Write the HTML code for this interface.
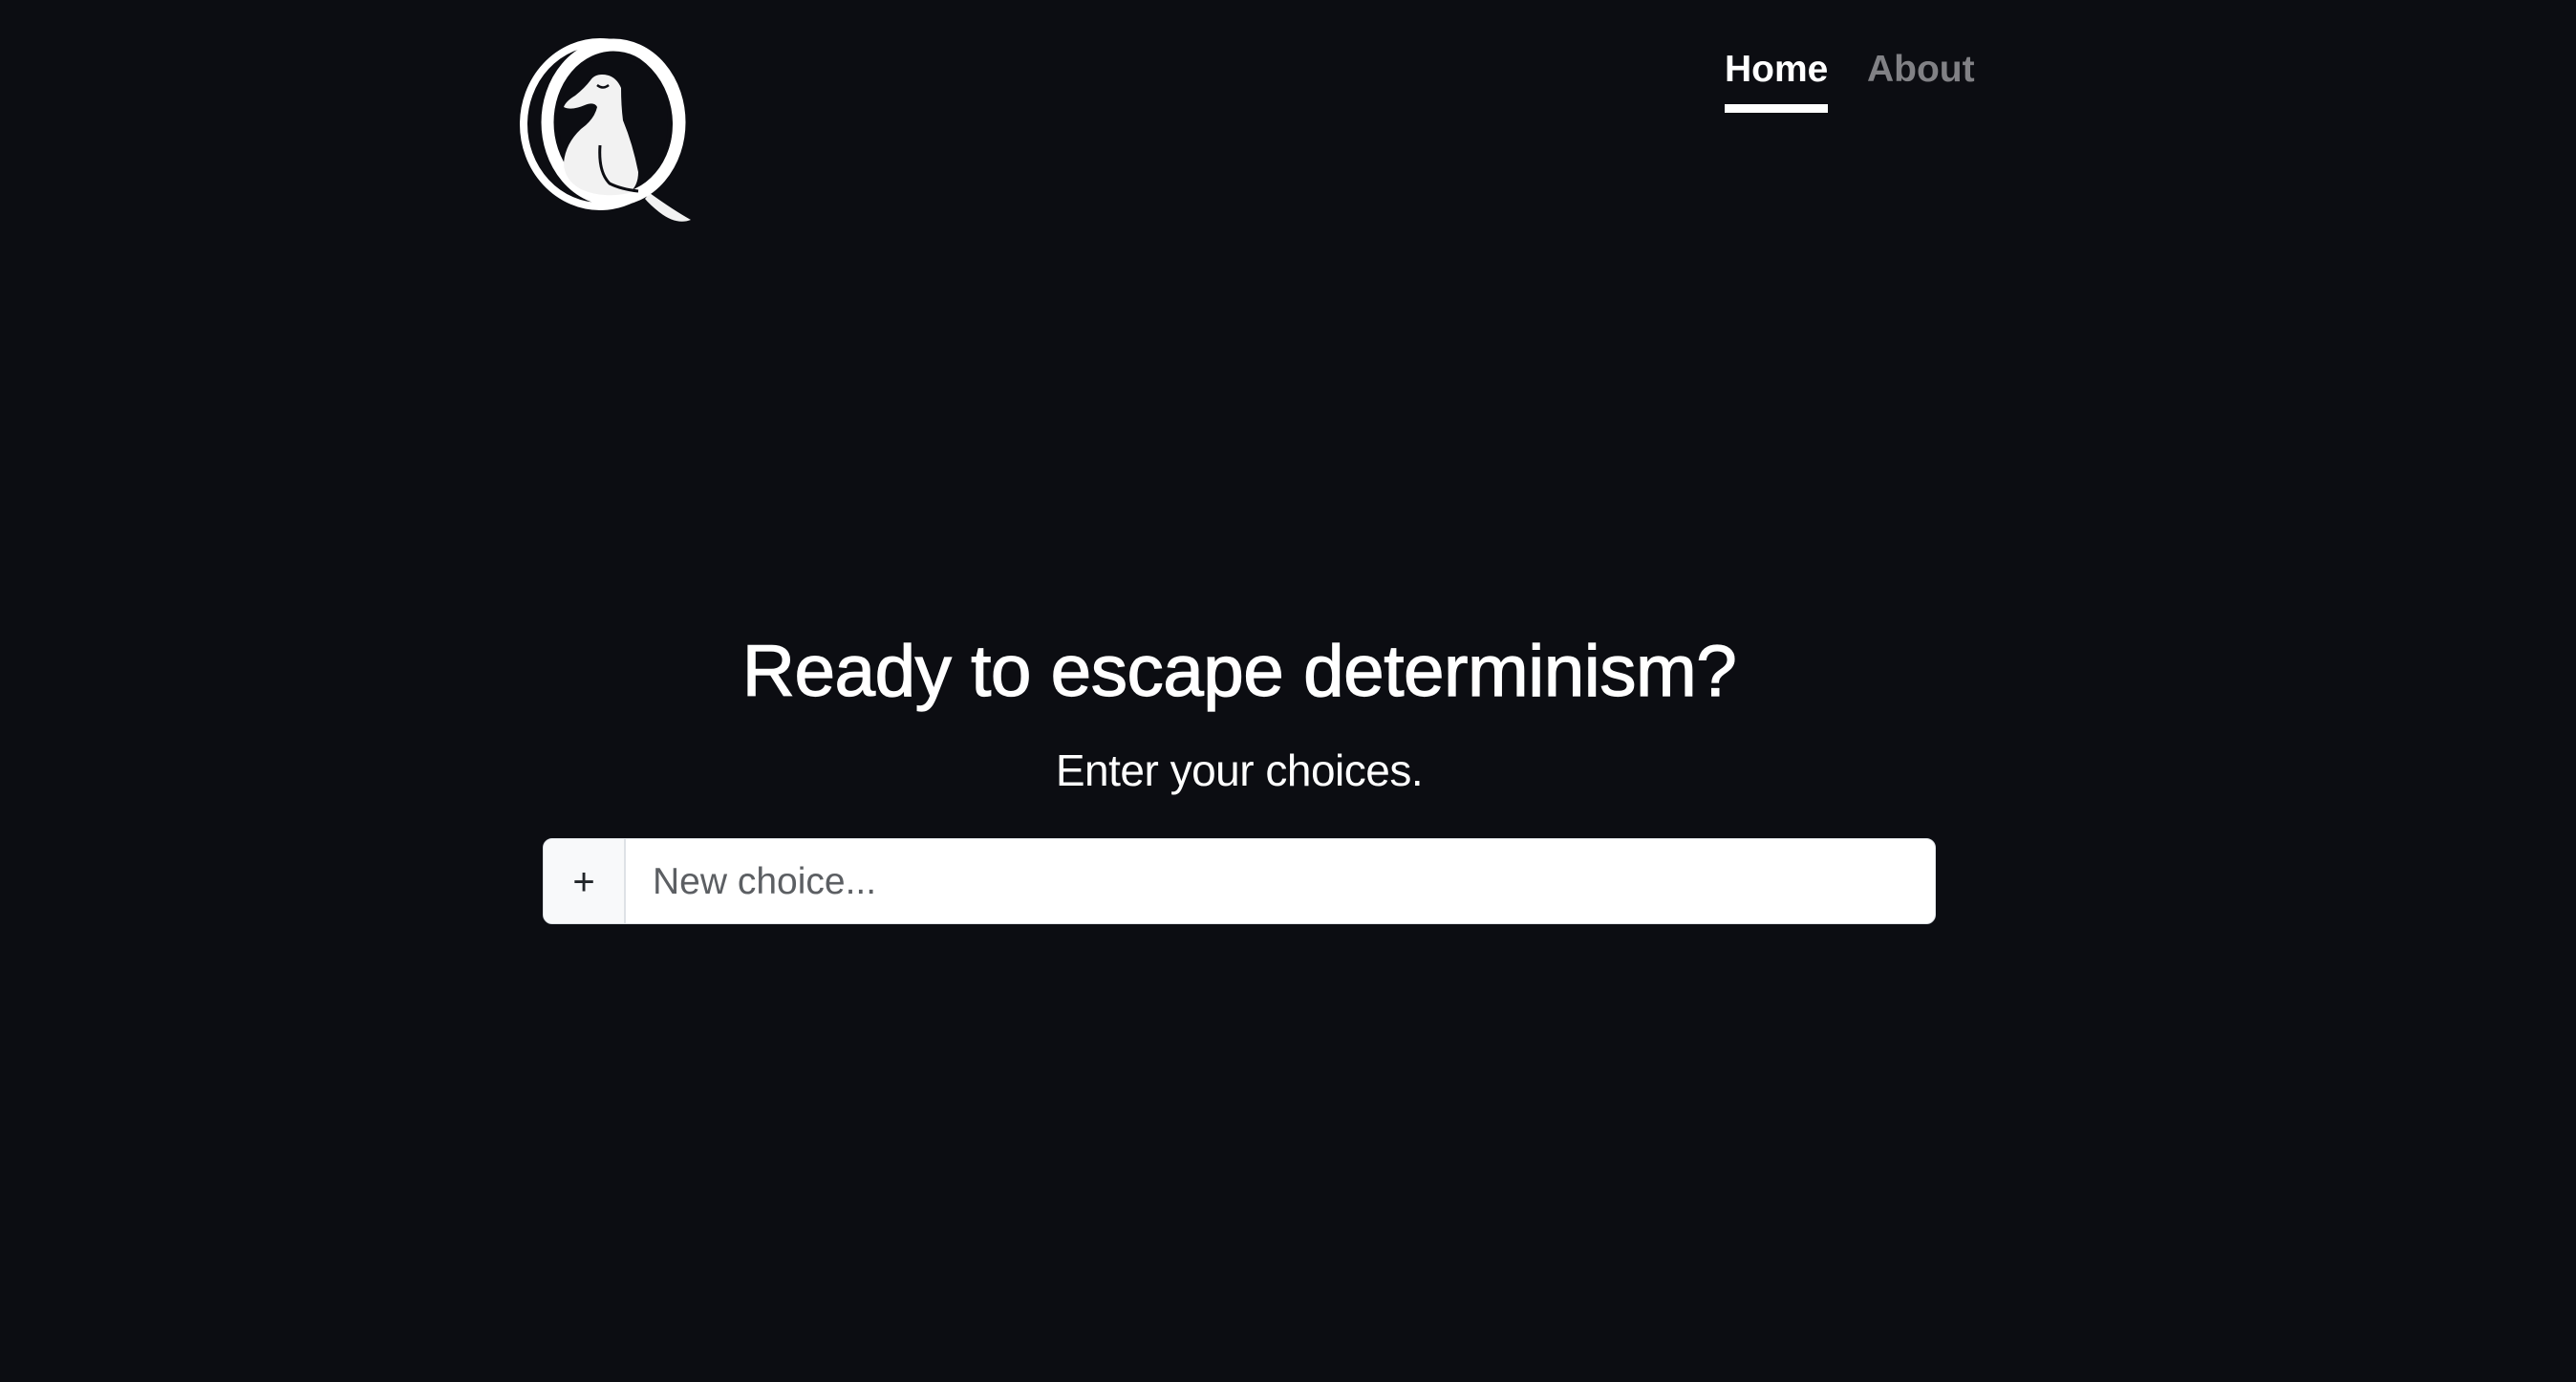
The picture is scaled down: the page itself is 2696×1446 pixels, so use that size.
<!DOCTYPE html>
<html><head><meta charset="utf-8"><style>
html,body{margin:0;padding:0;background:#0c0d12;width:2696px;height:1446px;overflow:hidden;font-family:"Liberation Sans",sans-serif}
.nav{position:absolute;top:48px;font-size:39px;font-weight:bold;line-height:50px}
.home{left:1805px;color:#fff}
.home:after{content:"";position:absolute;left:0;right:0;top:61px;height:9px;background:#fff}
.about{left:1954px;color:#818185}
h1{position:absolute;left:0;width:2594px;top:658px;margin:0;text-align:center;color:#fff;font-size:76.5px;font-weight:normal;line-height:90px;letter-spacing:-0.5px;-webkit-text-stroke:1.2px #fff}
.sub{position:absolute;left:0;width:2594px;top:778px;text-align:center;color:#fff;font-size:46px;line-height:56px;letter-spacing:-0.5px}
.box{position:absolute;left:568px;top:877px;width:1458px;height:90px;background:#fff;border-radius:10px;border:1px solid #dee2e6;box-sizing:border-box;overflow:hidden}
.add{position:absolute;left:0;top:0;width:84px;height:100%;background:#f8f9fa;border-right:2px solid #dee2e6;color:#212529;font-size:40px;line-height:90px;text-align:center}
.ph{position:absolute;left:114px;top:0;line-height:90px;font-size:39px;color:#5c5f63}
</style></head><body>
<svg style="position:absolute;left:530px;top:30px" width="210" height="210" viewBox="0 0 210 210">
 <path d="M150 172 Q175 190 193 200 Q178 206 160 192 Q150 184 145 178 Z" fill="#f2f2f2"/>
 <ellipse cx="98" cy="100" rx="80" ry="86" fill="none" stroke="#fff" stroke-width="8"/>
 <ellipse cx="112" cy="98" rx="69" ry="81" fill="none" stroke="#fff" stroke-width="13"/>
 <ellipse cx="112" cy="98" rx="57" ry="69" fill="#0c0d12"/>
 <path d="M100 48 Q114 48 120 62 Q120 80 122 96 Q132 120 138 150 Q138 165 128 172 Q100 178 78 168 Q60 158 60 140 Q62 120 78 105 Q92 95 95 82 Q92 76 82 80 Q68 86 60 82 Q62 76 72 70 Q82 62 88 54 Q92 48 100 48 Z" fill="#f2f2f2"/>
 <path d="M98 122 Q96 150 108 162 Q120 168 138 170" fill="none" stroke="#0c0d12" stroke-width="3"/>
 <path d="M95 59 Q101 64 107 59" fill="none" stroke="#0c0d12" stroke-width="2.5"/>
</svg>
<div class="nav home">Home</div>
<div class="nav about">About</div>
<h1>Ready to escape determinism?</h1>
<div class="sub">Enter your choices.</div>
<div class="box"><div class="add">+</div><div class="ph">New choice...</div></div>
</body></html>
